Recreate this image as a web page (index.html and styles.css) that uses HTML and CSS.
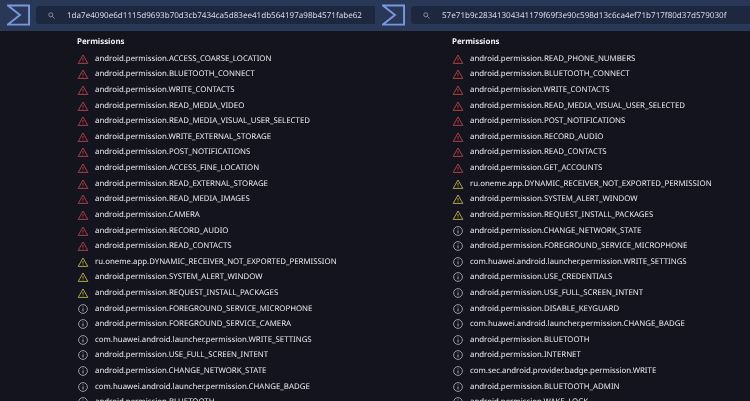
FILE: index.html
```html
<!DOCTYPE html>
<html lang="en">
<head>
<meta charset="utf-8">
<title>Permissions</title>
<link rel="stylesheet" href="styles.css">
</head>
<body>
<svg class="defs" width="0" height="0">
  <defs>
    <symbol id="tri" viewBox="0 0 12 12"><path d="M6 2 10.8 10.4H1.2Z" fill="none" stroke="currentColor" stroke-width=".9" stroke-linejoin="round"/><path d="M6 5V7.7M6 8.5V9.3" fill="none" stroke="currentColor" stroke-width=".8"/></symbol>
    <symbol id="inf" viewBox="0 0 12 12"><circle cx="6" cy="6" r="4.4" fill="none" stroke="currentColor" stroke-width=".8"/><path d="M6 5.4V8.4M6 3.5V4.3" fill="none" stroke="currentColor" stroke-width=".9"/></symbol>
    <symbol id="sig" viewBox="0 0 24 22"><path d="M1 1H23V21H1L13.5 11Z" fill="none" stroke="currentColor" stroke-width="2"/></symbol>
    <symbol id="mag" viewBox="0 0 8 8"><circle cx="3.2" cy="3.2" r="2.3" fill="none" stroke="currentColor" stroke-width=".9"/><path d="M5 5 7.4 7.4" stroke="currentColor" stroke-width=".9"/></symbol>
  </defs>
</svg>
<main class="panes">
  <section class="pane">
    <header class="top">
      <svg class="logo"><use href="#sig"/></svg>
      <div class="search"><svg class="mag"><use href="#mag"/></svg><span>1da7e4090e6d1115d9693b70d3cb7434ca5d83ee41db564197a98b4571fabe62</span></div>
    </header>
    <div class="body">
      <h2>Permissions</h2>
      <ul>
        <li class="r"><svg><use href="#tri"/></svg>android.permission.ACCESS_COARSE_LOCATION</li>
        <li class="r"><svg><use href="#tri"/></svg>android.permission.BLUETOOTH_CONNECT</li>
        <li class="r"><svg><use href="#tri"/></svg>android.permission.WRITE_CONTACTS</li>
        <li class="r"><svg><use href="#tri"/></svg>android.permission.READ_MEDIA_VIDEO</li>
        <li class="r"><svg><use href="#tri"/></svg>android.permission.READ_MEDIA_VISUAL_USER_SELECTED</li>
        <li class="r"><svg><use href="#tri"/></svg>android.permission.WRITE_EXTERNAL_STORAGE</li>
        <li class="r"><svg><use href="#tri"/></svg>android.permission.POST_NOTIFICATIONS</li>
        <li class="r"><svg><use href="#tri"/></svg>android.permission.ACCESS_FINE_LOCATION</li>
        <li class="r"><svg><use href="#tri"/></svg>android.permission.READ_EXTERNAL_STORAGE</li>
        <li class="r"><svg><use href="#tri"/></svg>android.permission.READ_MEDIA_IMAGES</li>
        <li class="r"><svg><use href="#tri"/></svg>android.permission.CAMERA</li>
        <li class="r"><svg><use href="#tri"/></svg>android.permission.RECORD_AUDIO</li>
        <li class="r"><svg><use href="#tri"/></svg>android.permission.READ_CONTACTS</li>
        <li class="y"><svg><use href="#tri"/></svg>ru.oneme.app.DYNAMIC_RECEIVER_NOT_EXPORTED_PERMISSION</li>
        <li class="y"><svg><use href="#tri"/></svg>android.permission.SYSTEM_ALERT_WINDOW</li>
        <li class="y"><svg><use href="#tri"/></svg>android.permission.REQUEST_INSTALL_PACKAGES</li>
        <li class="i"><svg><use href="#inf"/></svg>android.permission.FOREGROUND_SERVICE_MICROPHONE</li>
        <li class="i"><svg><use href="#inf"/></svg>android.permission.FOREGROUND_SERVICE_CAMERA</li>
        <li class="i"><svg><use href="#inf"/></svg>com.huawei.android.launcher.permission.WRITE_SETTINGS</li>
        <li class="i"><svg><use href="#inf"/></svg>android.permission.USE_FULL_SCREEN_INTENT</li>
        <li class="i"><svg><use href="#inf"/></svg>android.permission.CHANGE_NETWORK_STATE</li>
        <li class="i"><svg><use href="#inf"/></svg>com.huawei.android.launcher.permission.CHANGE_BADGE</li>
        <li class="i"><svg><use href="#inf"/></svg>android.permission.BLUETOOTH</li>
      </ul>
    </div>
  </section>
  <section class="pane pane-right">
    <header class="top">
      <svg class="logo"><use href="#sig"/></svg>
      <div class="search"><svg class="mag"><use href="#mag"/></svg><span>57e71b9c28341304341179f69f3e90c598d13c6ca4ef71b717f80d37d579030f</span></div>
    </header>
    <div class="body">
      <h2>Permissions</h2>
      <ul>
        <li class="r"><svg><use href="#tri"/></svg>android.permission.READ_PHONE_NUMBERS</li>
        <li class="r"><svg><use href="#tri"/></svg>android.permission.BLUETOOTH_CONNECT</li>
        <li class="r"><svg><use href="#tri"/></svg>android.permission.WRITE_CONTACTS</li>
        <li class="r"><svg><use href="#tri"/></svg>android.permission.READ_MEDIA_VISUAL_USER_SELECTED</li>
        <li class="r"><svg><use href="#tri"/></svg>android.permission.POST_NOTIFICATIONS</li>
        <li class="r"><svg><use href="#tri"/></svg>android.permission.RECORD_AUDIO</li>
        <li class="r"><svg><use href="#tri"/></svg>android.permission.READ_CONTACTS</li>
        <li class="r"><svg><use href="#tri"/></svg>android.permission.GET_ACCOUNTS</li>
        <li class="y"><svg><use href="#tri"/></svg>ru.oneme.app.DYNAMIC_RECEIVER_NOT_EXPORTED_PERMISSION</li>
        <li class="y"><svg><use href="#tri"/></svg>android.permission.SYSTEM_ALERT_WINDOW</li>
        <li class="y"><svg><use href="#tri"/></svg>android.permission.REQUEST_INSTALL_PACKAGES</li>
        <li class="i"><svg><use href="#inf"/></svg>android.permission.CHANGE_NETWORK_STATE</li>
        <li class="i"><svg><use href="#inf"/></svg>android.permission.FOREGROUND_SERVICE_MICROPHONE</li>
        <li class="i"><svg><use href="#inf"/></svg>com.huawei.android.launcher.permission.WRITE_SETTINGS</li>
        <li class="i"><svg><use href="#inf"/></svg>android.permission.USE_CREDENTIALS</li>
        <li class="i"><svg><use href="#inf"/></svg>android.permission.USE_FULL_SCREEN_INTENT</li>
        <li class="i"><svg><use href="#inf"/></svg>android.permission.DISABLE_KEYGUARD</li>
        <li class="i"><svg><use href="#inf"/></svg>com.huawei.android.launcher.permission.CHANGE_BADGE</li>
        <li class="i"><svg><use href="#inf"/></svg>android.permission.BLUETOOTH</li>
        <li class="i"><svg><use href="#inf"/></svg>android.permission.INTERNET</li>
        <li class="i"><svg><use href="#inf"/></svg>com.sec.android.provider.badge.permission.WRITE</li>
        <li class="i"><svg><use href="#inf"/></svg>android.permission.BLUETOOTH_ADMIN</li>
        <li class="i"><svg><use href="#inf"/></svg>android.permission.WAKE_LOCK</li>
      </ul>
    </div>
  </section>
</main>
</body>
</html>
```
FILE: styles.css
```css
* { box-sizing: border-box; }
html, body { margin: 0; height: 100%; overflow: hidden; background: #14141f; }
body { font-family: "Noto Sans", sans-serif; color: #ebebef; text-rendering: geometricPrecision; }
.defs { position: absolute; }
.panes { display: grid; grid-template-columns: 375px 375px; height: 401px; overflow: hidden; filter: blur(.25px); }
.pane { min-width: 0; overflow: hidden; }
.pane-right ul { margin-top: .5px; }
.top { height: 31px; display: flex; align-items: flex-start; padding: 4px 0 0 7px; background: #2a3858; }
.logo { width: 23px; height: 22px; color: #7a98e0; flex: none; }
.search { margin: 2px 0 0 6px; width: 339px; height: 18px; display: flex; align-items: center; padding-left: 12px; background: #1d2840; border-radius: 3px 0 0 3px; font-size: 8.07px; color: #d8dbe3; white-space: nowrap; }
.mag { width: 7px; height: 7px; color: #99a2b4; margin-right: 12px; flex: none; }
.body { padding: 4px 0 0 77px; }
h2 { margin: 0 0 2px; height: 14px; line-height: 14px; font-size: 7.9px; font-weight: 700; color: #f2f2f5; }
ul { list-style: none; margin: 0; padding: 0; }
li { height: 15.62px; display: flex; align-items: center; font-size: 7.85px; white-space: nowrap; }
li svg { width: 12px; height: 12px; margin-right: 6px; flex: none; }
.r svg { color: #b8444a; }
.y svg { color: #bdb548; }
.i svg { color: #b8bac2; }
```
